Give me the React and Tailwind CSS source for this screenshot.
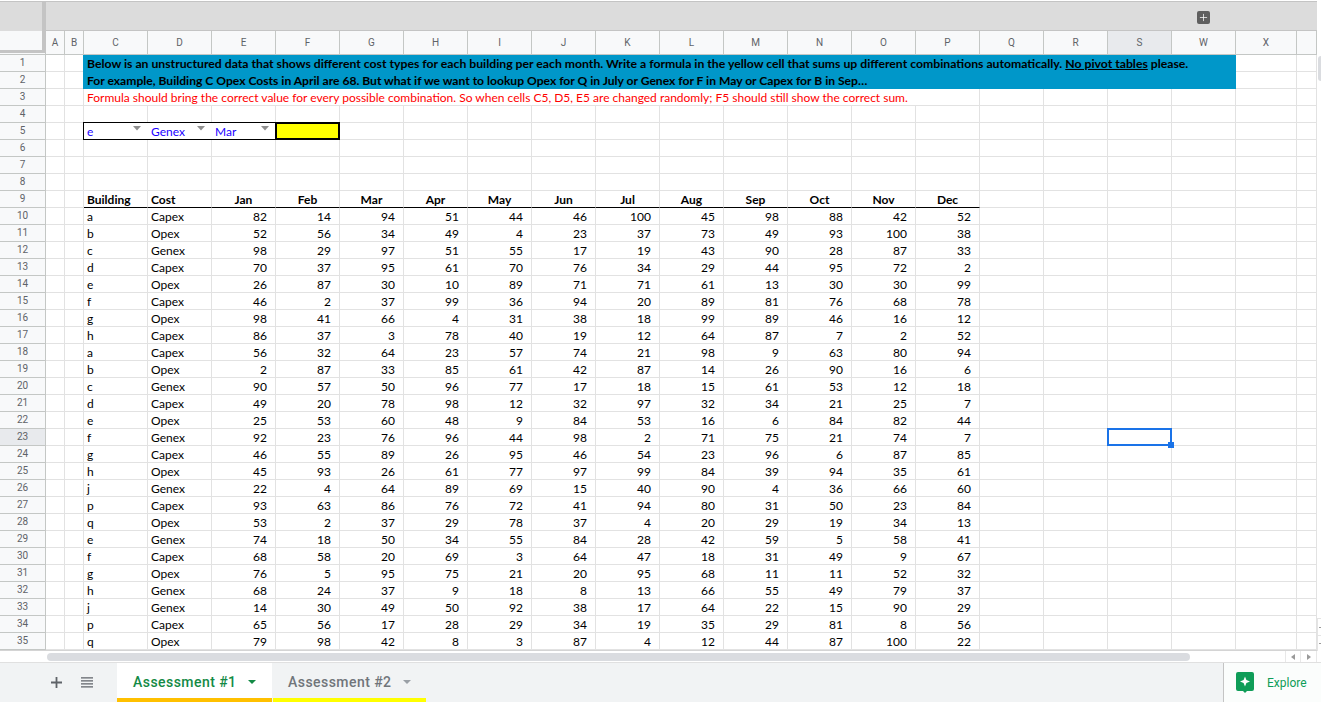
import React from 'react';
import { Plus } from 'lucide-react';

const columns = ['A', 'B', 'C', 'D', 'E', 'F', 'G', 'H', 'I', 'J', 'K', 'L', 'M', 'N', 'O', 'P', 'Q', 'R', 'S', 'W', 'X', ''];
const months = ['Jan', 'Feb', 'Mar', 'Apr', 'May', 'Jun', 'Jul', 'Aug', 'Sep', 'Oct', 'Nov', 'Dec'];

const rows = [
  ['a', 'Capex', 82, 14, 94, 51, 44, 46, 100, 45, 98, 88, 42, 52],
  ['b', 'Opex', 52, 56, 34, 49, 4, 23, 37, 73, 49, 93, 100, 38],
  ['c', 'Genex', 98, 29, 97, 51, 55, 17, 19, 43, 90, 28, 87, 33],
  ['d', 'Capex', 70, 37, 95, 61, 70, 76, 34, 29, 44, 95, 72, 2],
  ['e', 'Opex', 26, 87, 30, 10, 89, 71, 71, 61, 13, 30, 30, 99],
  ['f', 'Capex', 46, 2, 37, 99, 36, 94, 20, 89, 81, 76, 68, 78],
  ['g', 'Opex', 98, 41, 66, 4, 31, 38, 18, 99, 89, 46, 16, 12],
  ['h', 'Capex', 86, 37, 3, 78, 40, 19, 12, 64, 87, 7, 2, 52],
  ['a', 'Capex', 56, 32, 64, 23, 57, 74, 21, 98, 9, 63, 80, 94],
  ['b', 'Opex', 2, 87, 33, 85, 61, 42, 87, 14, 26, 90, 16, 6],
  ['c', 'Genex', 90, 57, 50, 96, 77, 17, 18, 15, 61, 53, 12, 18],
  ['d', 'Capex', 49, 20, 78, 98, 12, 32, 97, 32, 34, 21, 25, 7],
  ['e', 'Opex', 25, 53, 60, 48, 9, 84, 53, 16, 6, 84, 82, 44],
  ['f', 'Genex', 92, 23, 76, 96, 44, 98, 2, 71, 75, 21, 74, 7],
  ['g', 'Capex', 46, 55, 89, 26, 95, 46, 54, 23, 96, 6, 87, 85],
  ['h', 'Opex', 45, 93, 26, 61, 77, 97, 99, 84, 39, 94, 35, 61],
  ['j', 'Genex', 22, 4, 64, 89, 69, 15, 40, 90, 4, 36, 66, 60],
  ['p', 'Capex', 93, 63, 86, 76, 72, 41, 94, 80, 31, 50, 23, 84],
  ['q', 'Opex', 53, 2, 37, 29, 78, 37, 4, 20, 29, 19, 34, 13],
  ['e', 'Genex', 74, 18, 50, 34, 55, 84, 28, 42, 59, 5, 58, 41],
  ['f', 'Capex', 68, 58, 20, 69, 3, 64, 47, 18, 31, 49, 9, 67],
  ['g', 'Opex', 76, 5, 95, 75, 21, 20, 95, 68, 11, 11, 52, 32],
  ['h', 'Genex', 68, 24, 37, 9, 18, 8, 13, 66, 55, 49, 79, 37],
  ['j', 'Genex', 14, 30, 49, 50, 92, 38, 17, 64, 22, 15, 90, 29],
  ['p', 'Capex', 65, 56, 17, 28, 29, 34, 19, 35, 29, 81, 8, 56],
  ['q', 'Opex', 79, 98, 42, 8, 3, 87, 4, 12, 44, 87, 100, 22],
];

const gridCols = 'grid w-[1317px] grid-cols-[46px_19px_19px_repeat(18,64px)_61px_20px]';
const cell = 'h-[17px] border-r border-b border-[#e2e2e2] px-[3px] text-[12px] leading-[18px] text-black whitespace-nowrap';

const RowHead = ({ n }) => (
  <div className={`h-[17px] border-r border-b border-[#c4c7c5] text-center font-['Roboto'] text-[10px] leading-[15px] text-[#5f6368] ${n === 23 ? 'bg-[#e8eaed]' : 'bg-[#f8f9fa]'}`}>
    {n}
  </div>
);

const Blank = ({ count, extra = '' }) =>
  Array.from({ length: count }, (_, i) => <div key={i} className={`${cell} ${extra}`} />);

const Caret = () => (
  <svg width="8" height="4.500" viewBox="0 0 8 4.500" className="mt-[3px] shrink-0">
    <path d="M0 0h8L4 4.500z" fill="#8f8f8f" />
  </svg>
);

const Picker = ({ label, first }) => (
  <div className={`flex h-[18px] -mt-px justify-between border-y border-black pl-[3px] pr-[7px] text-[12px] leading-[17px] text-[#1a00ff] ${first ? '-ml-px border-l' : ''}`}>
    <span>{label}</span>
    <Caret />
  </div>
);

const App = () => (
  <div className="relative h-[711px] w-[1321px] overflow-hidden bg-white font-['Lato',sans-serif]">
    {/* frozen corner + column letters */}
    <div className="flex h-[55px]">
      <div className="flex h-[55px] w-[46px] shrink-0 flex-col">
        <div className="flex h-[52px] mt-[1px]">
          <div className="flex w-[42px] flex-col">
            <div className="h-[30px] border-t border-[#c4c4c4] bg-[#dcdcdc]" />
            <div className="flex-1 bg-[#f8f9fa]" />
            <div className="h-[3px] bg-[#c4c4c4]" />
          </div>
          <div className="w-[3px] bg-[#c4c4c4]" />
          <div className="w-[1px] bg-[#c4c4c4]" />
        </div>
        <div className="h-[2px] border-r border-b border-[#c4c7c5] bg-[#f8f9fa]" />
      </div>
      <div className="flex w-[1271px] flex-col">
        <div className="flex h-[30px] mt-[1px] items-start justify-end border-t border-b border-[#c4c4c4] bg-[#dcdcdc] pr-[107px] pt-[9px]">
          <div className="flex size-[13px] items-center justify-center rounded-[2px] bg-[#5f5f5f]">
            <Plus size={11} strokeWidth={1.6} className="text-white" />
          </div>
        </div>
        <div className="grid h-[24px] grid-cols-[19px_19px_repeat(18,64px)_61px_20px] border-b border-[#c4c7c5]">
          {columns.map((c, i) => (
            <div
              key={i}
              className={`border-r border-[#c4c7c5] text-center font-['Roboto'] text-[10px] leading-[23px] text-[#5f6368] ${c === 'S' ? 'bg-[#e8eaed]' : 'bg-[#f8f9fa]'}`}
            >
              {c}
            </div>
          ))}
        </div>
      </div>
    </div>

    {/* vertical scrollbar thumb and buttons */}
    <div className="absolute top-[56px] right-0 h-[25px] w-[3px] rounded-l-[3px] bg-[#dadce0]" />
    <div className="absolute top-[618px] right-0 flex h-[17px] w-[4px] items-center justify-end border-t border-l border-[#e4e4e4]">
      <div className="h-px w-[2px] bg-[#9a9a9a]" />
    </div>
    <div className="absolute top-[635px] right-0 flex h-[16px] w-[4px] items-center justify-end border-t border-l border-[#e4e4e4]">
      <div className="h-px w-[2px] bg-[#9a9a9a]" />
    </div>

    {/* sheet body */}
    <div className={gridCols}>
      <RowHead n={1} />
      <Blank count={2} />
      <div className="col-span-18 -ml-px h-[17px] bg-[#0097c9] pl-[4px] text-[12.23px] font-bold leading-[17px] whitespace-nowrap text-black">
        Below is an unstructured data that shows different cost types for each building per each month. Write a formula in the yellow cell that sums up different combinations automatically. <span className="underline">No pivot tables</span> please.
      </div>
      <Blank count={2} />

      <RowHead n={2} />
      <Blank count={2} />
      <div className="col-span-18 -ml-px h-[17px] bg-[#0097c9] pl-[4px] text-[12.1px] font-bold leading-[17px] whitespace-nowrap text-black">
        For example, Building C Opex Costs in April are 68. But what if we want to lookup Opex for Q in July or Genex for F in May or Capex for B in Sep…
      </div>
      <Blank count={2} />

      <RowHead n={3} />
      <Blank count={2} />
      <div className="col-span-14 h-[17px] border-r border-b border-[#e2e2e2] pl-[3px] text-[12px] leading-[17px] whitespace-nowrap text-[#ff0000]">
        Formula should bring the correct value for every possible combination. So when cells C5, D5, E5 are changed randomly; F5 should still show the correct sum.
      </div>
      <Blank count={6} />

      <RowHead n={4} />
      <Blank count={22} />

      <RowHead n={5} />
      <Blank count={2} />
      <Picker label="e" first />
      <Picker label="Genex" />
      <Picker label="Mar" />
      <div className="h-[18px] w-[65px] -mt-px -ml-px border-2 border-black bg-[#ffff00]" />
      <Blank count={16} />

      {[6, 7, 8].map((n) => (
        <React.Fragment key={n}>
          <RowHead n={n} />
          <Blank count={22} />
        </React.Fragment>
      ))}

      <RowHead n={9} />
      <Blank count={2} />
      <div className={`${cell} font-bold border-b-black`}>Building</div>
      <div className={`${cell} font-bold border-b-black`}>Cost</div>
      {months.map((m) => (
        <div key={m} className={`${cell} text-center font-bold border-b-black`}>{m}</div>
      ))}
      <Blank count={6} />

      {rows.map((row, i) => {
        const n = i + 10;
        return (
          <React.Fragment key={n}>
            <RowHead n={n} />
            <Blank count={2} />
            <div className={cell}>{row[0]}</div>
            <div className={cell}>{row[1]}</div>
            {row.slice(2).map((v, j) => (
              <div key={j} className={`${cell} text-right pr-[8px]`}>{v}</div>
            ))}
            <Blank count={2} />
            {n === 23 ? (
              <div className="relative -mt-px -ml-px h-[18px] w-[65px] border-2 border-[#1a73e8]">
                <div className="absolute -right-[4px] -bottom-[4px] size-[6px] bg-[#1a73e8]" />
              </div>
            ) : (
              <Blank count={1} />
            )}
            <Blank count={3} />
          </React.Fragment>
        );
      })}
    </div>

    {/* horizontal scrollbar */}
    <div className="flex h-[12px] w-[1317px] items-center border-t border-[#d4d4d4] bg-white">
      <div className="h-[8px] w-[47px]" />
      <div className="h-[8px] w-[1143px] rounded-full bg-[#dadce0]" />
      <div className="ml-auto flex">
        <div className="flex h-[11px] w-[16px] items-center justify-center border-x border-[#e8e8e8]">
          <svg width="4" height="6" viewBox="0 0 4 6"><path d="M4 0v6L0 3z" fill="#9a9a9a" /></svg>
        </div>
        <div className="flex h-[11px] w-[16px] items-center justify-center border-r border-[#e8e8e8]">
          <svg width="4" height="6" viewBox="0 0 4 6"><path d="M0 0v6l4-3z" fill="#9a9a9a" /></svg>
        </div>
      </div>
    </div>

    {/* sheet tabs */}
    <div className="flex h-[40px] items-stretch border-t border-[#e0e0e0] bg-[#f1f3f4]">
      <div className="flex w-[117px] items-center pl-[51px]">
        <svg width="11" height="11" viewBox="0 0 11 11">
          <path d="M5.500 0v11M0 5.500h11" stroke="#5f6368" strokeWidth="1.800" />
        </svg>
        <svg width="12" height="11" viewBox="0 0 12 11" className="ml-[19px]">
          <path d="M0 .8h12M0 3.800h12M0 6.800h12M0 9.800h12" stroke="#5f6368" strokeWidth="1.300" />
        </svg>
      </div>
      <div className="flex w-[155px] flex-col bg-white">
        <div className="flex flex-1 items-center pt-[3px] pl-[16px] font-['Roboto'] text-[14px] font-medium tracking-[0.45px] text-[#138a45]">
          Assessment #1
          <svg width="8" height="4" viewBox="0 0 8 4" className="ml-[12px]"><path d="M0 0h8L4 4z" fill="#138a45" /></svg>
        </div>
        <div className="h-[4px] bg-[#ffc000]" />
      </div>
      <div className="ml-px flex w-[153px] flex-col">
        <div className="flex flex-1 items-center pt-[3px] pl-[15px] font-['Roboto'] text-[14px] font-medium tracking-[0.45px] text-[#70757a]">
          Assessment #2
          <svg width="8" height="4" viewBox="0 0 8 4" className="ml-[12px]"><path d="M0 0h8L4 4z" fill="#9aa0a6" /></svg>
        </div>
        <div className="h-[4px] bg-[#ffff00]" />
      </div>
      <div className="ml-auto flex w-[98px] items-center border-l border-[#c4c4c4] bg-[#fbfdfc] pl-[12px]">
        <svg width="18" height="21" viewBox="0 0 18 21">
          <path d="M2 0h14a2 2 0 0 1 2 2v15a2 2 0 0 1-2 2h-5l-2 2-2-2H2a2 2 0 0 1-2-2V2a2 2 0 0 1 2-2z" fill="#0f9d58" />
          <path d="M9 4.500l1.400 3.600L14 9.500l-3.600 1.400L9 14.500l-1.400-3.600L4 9.500l3.600-1.400z" fill="#fff" />
        </svg>
        <span className="ml-[13px] font-['Roboto'] text-[12px] text-[#0f9d58]">Explore</span>
      </div>
    </div>
  </div>
);

export default App;
